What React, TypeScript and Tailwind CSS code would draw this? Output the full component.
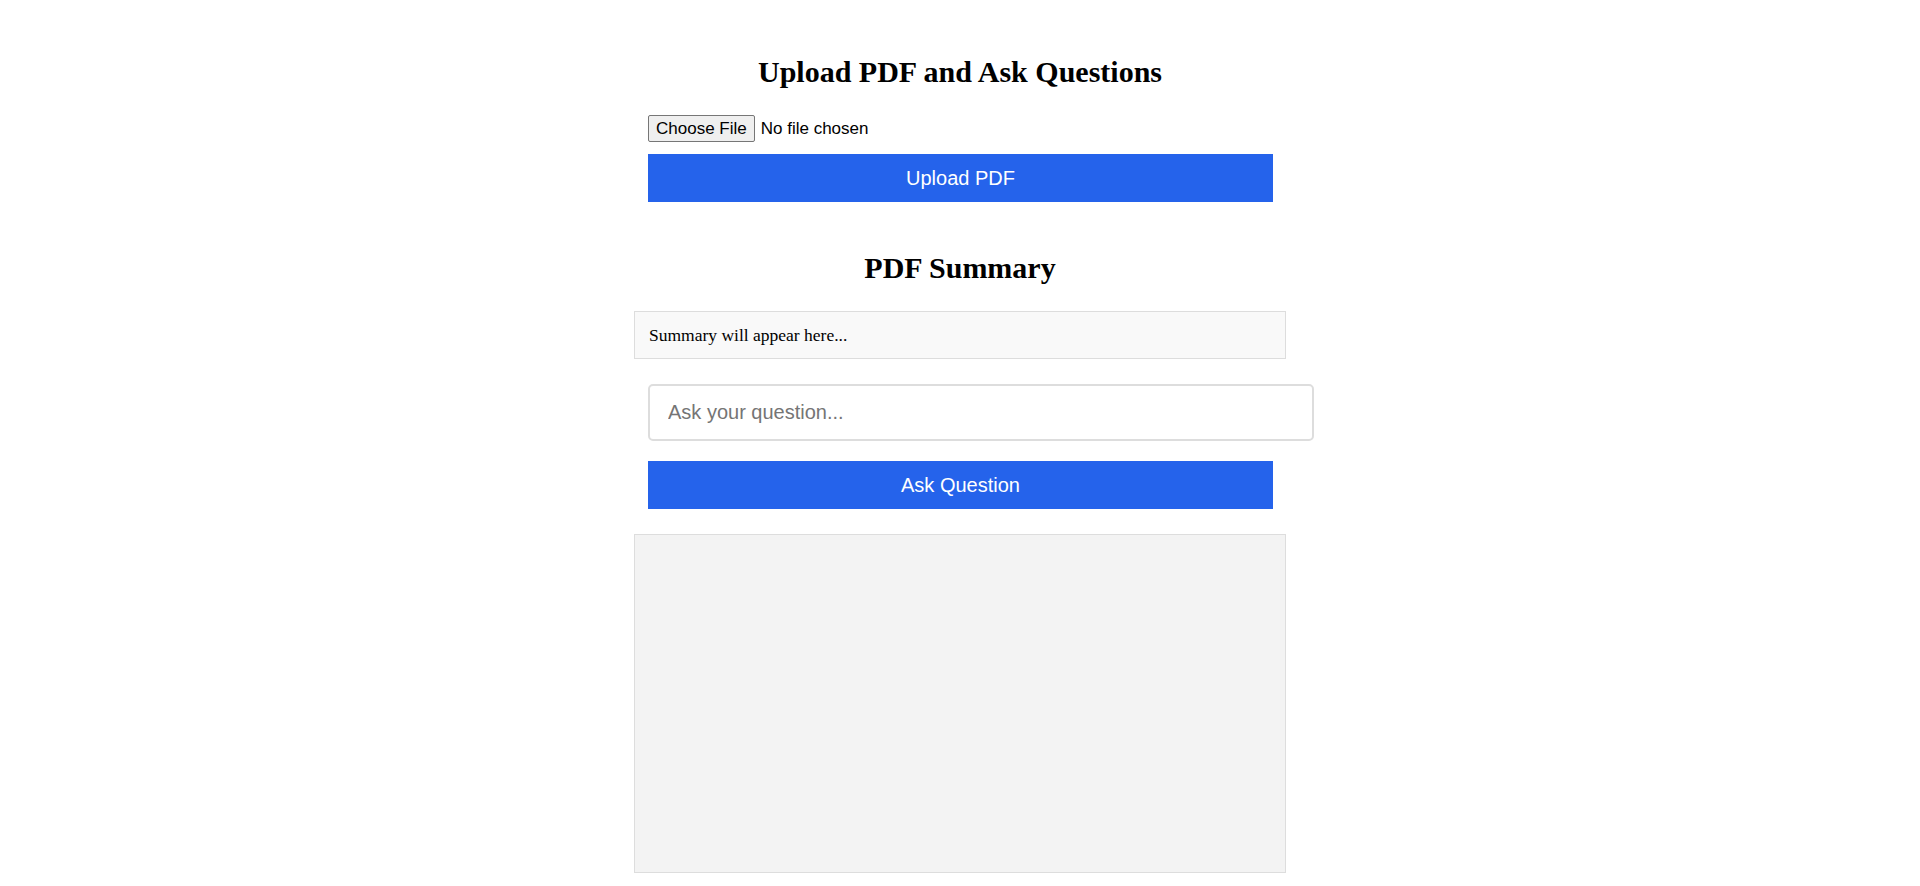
export default function App() {
  return (
    <div className="min-h-screen bg-white font-['Liberation_Serif',serif] text-black">
      <div className="mx-auto flex w-[652px] flex-col pt-[54px]">
        <h1 className="text-center text-[30px] font-bold leading-[36px]">
          Upload PDF and Ask Questions
        </h1>
        <input
          type="file"
          accept="application/pdf"
          className="ml-[14px] mt-[25px] h-[27px] w-[300px] font-['Liberation_Sans',Arial,sans-serif] text-[17px] leading-[23px] file:mr-[6px] file:h-[27px] file:rounded-[2px] file:border file:border-[#767676] file:bg-[#efefef] file:px-[7px]"
        />
        <button className="ml-[14px] mt-[12px] h-[48px] w-[625px] bg-[#2563eb] font-['Liberation_Sans',Arial,sans-serif] text-[20px] text-white">
          Upload PDF
        </button>

        <h2 className="mt-[48px] text-center text-[30px] font-bold leading-[36px]">PDF Summary</h2>
        <div className="mt-[25px] h-[48px] border border-[#ddd] bg-[#f9f9f9] px-[14px] text-[17.5px] leading-[46px]">
          Summary will appear here...
        </div>

        <input
          type="text"
          placeholder="Ask your question..."
          className="ml-[14px] mt-[25px] h-[57px] w-[666px] rounded-[5px] border-2 border-[#ddd] bg-white px-[18px] font-['Liberation_Sans',Arial,sans-serif] text-[20px] outline-none placeholder:text-[#757575]"
        />
        <button className="ml-[14px] mt-[20px] h-[48px] w-[625px] bg-[#2563eb] font-['Liberation_Sans',Arial,sans-serif] text-[20px] text-white">
          Ask Question
        </button>

        <div className="mt-[25px] h-[339px] border border-[#ddd] bg-[#f3f3f3]"></div>
      </div>
    </div>
  );
}
